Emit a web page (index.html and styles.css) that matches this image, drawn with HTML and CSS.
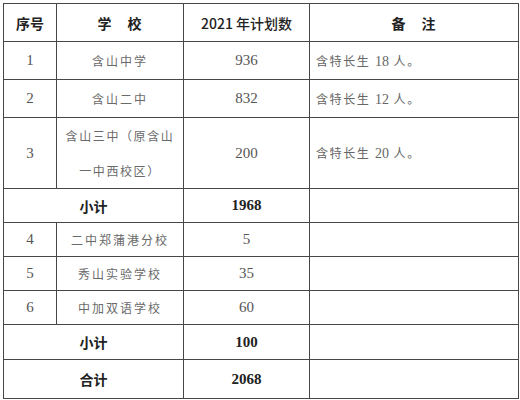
FILE: index.html
```html
<!DOCTYPE html>
<html lang="zh">
<head>
<meta charset="utf-8">
<link rel="stylesheet" href="styles.css">
</head>
<body>
<div class="page">
<table class="plan">
<colgroup>
<col class="c1"><col class="c2"><col class="c3"><col class="c4">
</colgroup>
<tr class="head h38">
<th>序号</th><th><span class="wide">学　校</span></th><th>2021 年计划数</th><th><span class="wide">备　注</span></th>
</tr>
<tr class="h38">
<td class="num">1</td><td class="name">含山中学</td><td class="num">936</td><td class="note">含特长生 <span class="d">18</span> 人。</td>
</tr>
<tr class="h38">
<td class="num">2</td><td class="name">含山二中</td><td class="num">832</td><td class="note">含特长生 <span class="d">12</span> 人。</td>
</tr>
<tr class="h70">
<td class="num">3</td><td class="name two">含山三中（原含山<br>一中西校区）</td><td class="num">200</td><td class="note">含特长生 <span class="d">20</span> 人。</td>
</tr>
<tr class="sum h34">
<td colspan="2" class="label">小计</td><td class="total">1968</td><td></td>
</tr>
<tr class="h34">
<td class="num">4</td><td class="name">二中郑蒲港分校</td><td class="num">5</td><td></td>
</tr>
<tr class="h34">
<td class="num">5</td><td class="name">秀山实验学校</td><td class="num">35</td><td></td>
</tr>
<tr class="h34">
<td class="num">6</td><td class="name">中加双语学校</td><td class="num">60</td><td></td>
</tr>
<tr class="sum h35">
<td colspan="2" class="label">小计</td><td class="total">100</td><td></td>
</tr>
<tr class="sum h39">
<td colspan="2" class="label">合计</td><td class="total">2068</td><td></td>
</tr>
</table>
</div>
</body>
</html>
```
FILE: styles.css
```css
html, body {
  margin: 0;
  padding: 0;
  background: #ffffff;
}
.page {
  padding: 3px 0 0 3px;
}
.plan {
  border-collapse: collapse;
  table-layout: fixed;
  width: 515px;
  font-family: "Liberation Serif", "Noto Sans CJK SC", serif;
  color: #555;
  font-size: 14px;
}
.c1 { width: 53px; }
.c2 { width: 127px; }
.c3 { width: 126px; }
.c4 { width: 209px; }
.plan th, .plan td {
  border: 1px solid #474747;
  padding: 0;
  text-align: center;
  vertical-align: middle;
}
.h38 { height: 38px; }
.h70 { height: 70px; }
.h34 { height: 34px; }
.h35 { height: 35px; }
.h39 { height: 39px; }
.head th {
  font-family: "Noto Sans CJK SC", "Liberation Sans", sans-serif;
  font-weight: 700;
  color: #222;
  font-size: 14px;
}
.head th:nth-child(3) {
  font-weight: 500;
  font-size: 14px;
}
.wide {
  letter-spacing: 1px;
}
.plan .num {
  font-size: 15px;
  color: #555;
}
.plan .name {
  font-family: "Noto Sans CJK SC", sans-serif;
  font-size: 12px;
  letter-spacing: 2px;
  color: #6a6a6a;
  font-weight: 400;
}
.plan .name.two {
  line-height: 35px;
  letter-spacing: 1.6px;
}
.plan .note {
  text-align: left;
  padding-left: 6px;
  font-family: "Liberation Serif", "Noto Sans CJK SC", serif;
  font-size: 12px;
  letter-spacing: 1.6px;
  color: #666;
}
.plan .note .d {
  font-size: 14px;
  letter-spacing: 0;
}
.plan .label {
  font-family: "Noto Sans CJK SC", sans-serif;
  font-weight: 700;
  color: #222;
  font-size: 14px;
}
.plan .total {
  font-weight: 700;
  color: #222;
  font-size: 15px;
}
```
